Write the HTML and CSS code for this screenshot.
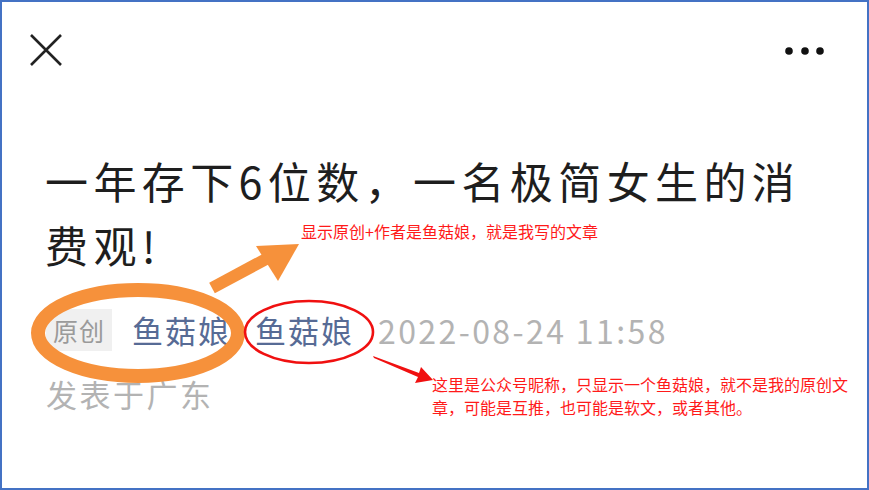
FILE: index.html
```html
<!DOCTYPE html>
<html lang="zh">
<head>
<meta charset="utf-8">
<link rel="stylesheet" href="styles.css">
</head>
<body>
<div class="frame">
  <div class="topbar">
    <svg class="close" width="34" height="34" viewBox="0 0 34 34"><path d="M2 2 L32 32 M32 2 L2 32" stroke="#222" stroke-width="2.6" fill="none"/></svg>
    <svg class="more" width="42" height="10" viewBox="0 0 42 10"><circle cx="5" cy="6" r="3.8" fill="#111"/><circle cx="21" cy="6" r="3.8" fill="#111"/><circle cx="36" cy="6" r="3.8" fill="#111"/></svg>
  </div>
  <h1 class="title">一年存下6位数，一名极简女生的消费观!</h1>
  <div class="meta">
    <span class="tag">原创</span><span class="author">鱼菇娘</span><span class="account">鱼菇娘</span><span class="date">2022-08-24 11:58</span><br><span class="loc">发表于广东</span>
  </div>

  <svg class="marks" width="869" height="490" viewBox="0 0 869 490">
    <ellipse cx="138" cy="333" rx="100" ry="43" fill="none" stroke="#f6913b" stroke-width="14"/>
    <path d="M212 288 L268 258" stroke="#f6913b" stroke-width="12" fill="none"/>
    <polygon points="256,246 299,244 278,281" fill="#f6913b"/>
    <ellipse cx="309" cy="332" rx="64" ry="31" fill="none" stroke="#f01010" stroke-width="2.6"/>
    <polygon points="373,356 374,358 418,377 415,383 433,380 421,367 419,373" fill="#f01010"/>
  </svg>
  <div class="note note1">显示原创+作者是鱼菇娘，就是我写的文章</div>
  <div class="note note2">这里是公众号昵称，只显示一个鱼菇娘，就不是我的原创文<br>章，可能是互推，也可能是软文，或者其他。</div>
</div>
</body>
</html>
```
FILE: styles.css
```css
html, body {
  margin: 0;
  padding: 0;
  background: #fff;
}
body {
  font-family: "Noto Sans CJK SC", "Noto Sans", sans-serif;
}
.frame {
  position: relative;
  width: 869px;
  height: 490px;
  box-sizing: border-box;
  border: 2px solid #4472c4;
  background: #fff;
  overflow: hidden;
}
.topbar {
  display: flex;
  justify-content: space-between;
  align-items: center;
  height: 96px;
  padding: 0 41px 0 27px;
}
.close { display: block; }
.more { display: block; }
.title {
  width: 790px;
  margin: 50px 0 0 43px;
  font-size: 43px;
  font-weight: 400;
  line-height: 64px;
  letter-spacing: 5.4px;
  color: #1e1e1e;
}
.meta {
  margin: 17px 0 0 44px;
  line-height: 64px;
  font-size: 31px;
  letter-spacing: 2px;
}
.tag {
  display: inline-block;
  vertical-align: middle;
  background: #f0f0f0;
  color: #9a9a9a;
  font-size: 25px;
  line-height: 42px;
  height: 42px;
  padding: 0 7px;
  letter-spacing: 1px;
  margin-right: 20px;
}
.author, .account {
  color: #576b95;
  vertical-align: middle;
}
.author { margin-right: 24px; }
.account { margin-right: 24px; }
.date {
  color: #b3b3b3;
  vertical-align: middle;
  font-size: 32px;
  letter-spacing: 2.4px;
}
.loc {
  color: #b3b3b3;
  letter-spacing: 2.5px;
}
.marks {
  position: absolute;
  left: -2px;
  top: -2px;
}
.note {
  position: absolute;
  color: #ff1a1a;
  font-size: 16px;
  line-height: 23px;
  font-family: "Noto Sans CJK SC", sans-serif;
}
.note1 { left: 299px; top: 218px; }
.note2 { left: 430px; top: 371px; }
```
